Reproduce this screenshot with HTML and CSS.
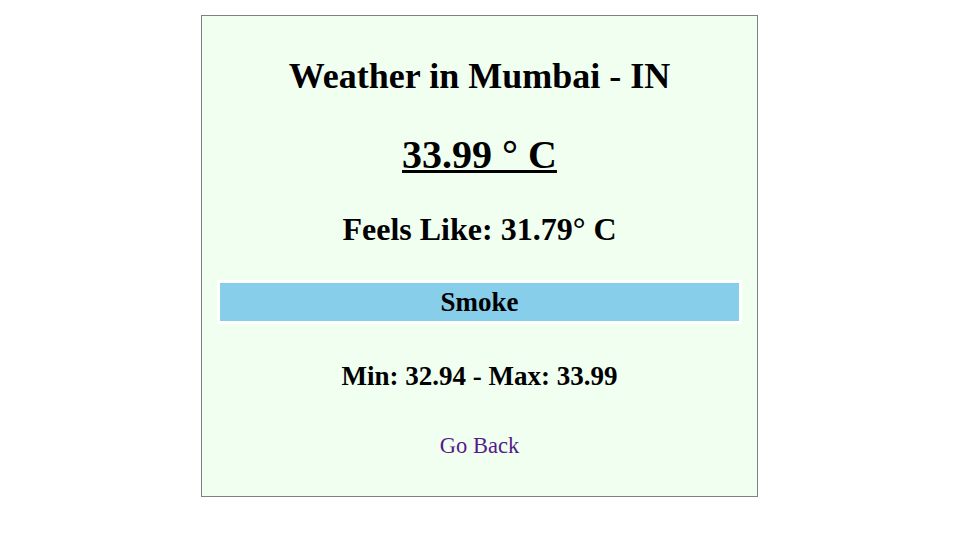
FILE: index.html
```html
<!DOCTYPE html>
<html>
<head>
<meta charset="utf-8">
<link rel="stylesheet" href="styles.css">
</head>
<body>
<div class="card">
  <h1 class="title">Weather in Mumbai - IN</h1>
  <h2 class="temp">33.99 ° C</h2>
  <h3 class="feels">Feels Like: 31.79° C</h3>
  <div class="cond">Smoke</div>
  <h4 class="range">Min: 32.94 - Max: 33.99</h4>
  <a class="back" href="#">Go Back</a>
</div>
</body>
</html>
```
FILE: styles.css
```css
html, body {
  margin: 0;
  background: #ffffff;
  font-family: "Liberation Serif", "Times New Roman", serif;
}
body {
  padding: 0 0 0 2px;
}
.card {
  width: 557px;
  margin: 15px auto 0;
  border: 1px solid #808080;
  background: #f0fff0;
  text-align: center;
  padding: 0 15px 37px;
  box-sizing: border-box;
  display: flex;
  flex-direction: column;
  align-items: stretch;
}
.title {
  font-size: 36px;
  margin: 40px 0 0;
  line-height: 40px;
}
.temp {
  font-size: 40px;
  margin: 37px 0 0;
  line-height: 44px;
  text-decoration: underline;
  text-decoration-thickness: 3px;
}
.feels {
  font-size: 32px;
  margin: 34px 0 0;
  line-height: 36px;
}
.cond {
  margin: 33px 0 0;
  background: #87ceeb;
  border: 3px solid #ffffff;
  font-size: 27px;
  font-weight: bold;
  line-height: 38px;
}
.range {
  font-size: 27px;
  margin: 37px 0 0;
  line-height: 31px;
}
.back {
  align-self: center;
  margin-top: 41px;
  font-size: 22.5px;
  line-height: 26px;
  color: #551a8b;
  text-decoration: none;
}
```
